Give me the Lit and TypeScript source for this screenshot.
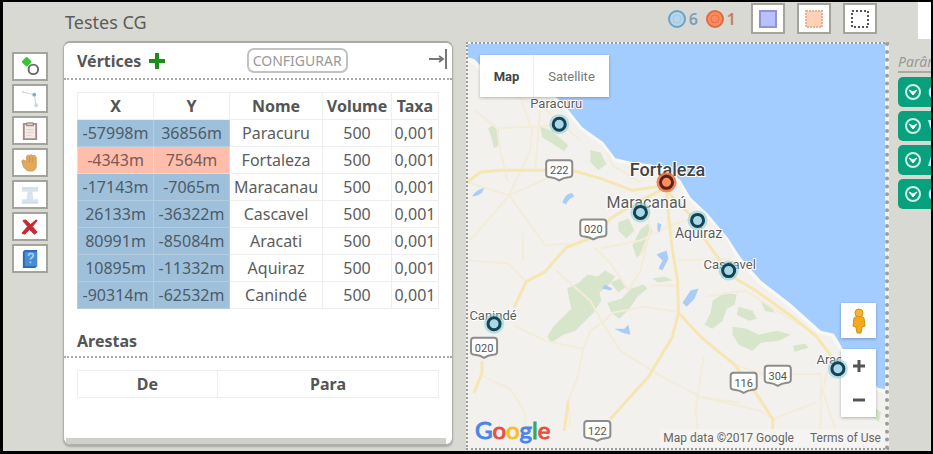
import { LitElement, html, svg, css } from "lit";
import { customElement } from "lit/decorators.js";
import { classMap } from "lit/directives/class-map.js";

const vertices = [
  { x: "-57998m", y: "36856m", nome: "Paracuru", centro: false },
  { x: "-4343m", y: "7564m", nome: "Fortaleza", centro: true },
  { x: "-17143m", y: "-7065m", nome: "Maracanau", centro: false },
  { x: "26133m", y: "-36322m", nome: "Cascavel", centro: false },
  { x: "80991m", y: "-85084m", nome: "Aracati", centro: false },
  { x: "10895m", y: "-11332m", nome: "Aquiraz", centro: false },
  { x: "-90314m", y: "-62532m", nome: "Canindé", centro: false },
];

const tools = [
  {
    label: "Adicionar vértice",
    icon: svg`<path d="M7 1l4 4-4 4-4-4z" fill="#35c435" stroke="#35c435" stroke-width="2" stroke-linejoin="round"/><circle cx="14" cy="13" r="5" fill="#fff" stroke="#666" stroke-width="2"/>`,
  },
  {
    label: "Adicionar aresta",
    icon: svg`<path d="M2 3l13 3 2 12" fill="none" stroke="#c6d6ea" stroke-width="1"/><circle cx="15" cy="6" r="2" fill="#8ba4d0"/><circle cx="17" cy="17" r="2" fill="#c6d6ee"/><circle cx="3" cy="3" r="1" fill="#c6d6ee"/>`,
  },
  {
    label: "Colar",
    icon: svg`<path d="M4 3h13v16H4z" fill="#f3e9e7" stroke="#a58c89" stroke-width="2"/><path d="M7 2h7v3H7z" fill="#d9c9c6" stroke="#8d7774"/><path d="M7 9h7M7 12h7M7 15h5" stroke="#ddd0ce"/>`,
  },
  {
    label: "Mover",
    icon: svg`<path d="M7 4c0-2 2-2 3-1 1-2 3-1 3 0 2-1 4 0 4 2v9c0 3-2 5-6 5-4 0-5-2-7-4L2 9c0-2 2-2 3-1l2 1z" fill="#e0a95c" stroke="#d09a50" stroke-width="1"/><path d="M10 4v6M13 4v6" stroke="#c9924a"/>`,
  },
  {
    label: "Texto",
    icon: svg`<path d="M2 3h17v4H2zM8 7h5l1 8H7zM2 15h17v4H2z" fill="#d9e3ee"/><path d="M2 3h17M2 19h17" stroke="#c5d3e2"/>`,
  },
  {
    label: "Excluir",
    icon: svg`<path d="M3 4l3-1 5 5 6-5 1 1-5 6 5 6-3 2-5-5-5 5-3-1 6-7z" fill="#c62a33" stroke="#c62a33"/>`,
  },
  {
    label: "Ajuda",
    icon: svg`<path d="M3 3l2-2h13v17l-2 2H3z" fill="#2c6bb3"/><path d="M5 3h13v15H5z" fill="#4b8bd0"/><path d="M9 7c0-3 5-3 5 0 0 2-3 2-3 4M11 13v2" fill="none" stroke="#9cccf5" stroke-width="2"/>`,
  },
];

const roads = {
  major: [
    "M467 182L480 172 500 170H545L575 171 600 178 632 190 660 186",
    "M514 307L526 281 545 271 566 247 594 236 610 218 640 200 660 190",
    "M610 418L648 376 672 336 678 312 677 280 672 250 668 215 666 190",
    "M678 312L700 336 734 364 755 392 772 418 772 436",
    "M666 190L690 215 705 240 730 275 755 290 790 315 815 335 830 355",
    "M482 360V372L474 392",
    "M564 430L568 400",
  ],
  minor: [
    "M467 260L508 263 526 281", "M508 182L500 150 497 128 475 110", "M509 195L530 150 532 130 520 97",
    "M509 195L470 240", "M509 195L545 245 568 243 566 247", "M467 182L509 195 560 172",
    "M535 170L540 110M500 128L560 125", "M514 325L545 340 583 348 590 330 602 322",
    "M583 348L577 378 568 400 570 425", "M602 322L620 350 660 375 700 396 740 402",
    "M482 375L510 388 524 410 528 448", "M556 270L590 300 602 322 612 312 644 306 677 311",
    "M594 247L610 262 628 290 640 270 650 230", "M677 260L730 258M650 285H677", "M645 200L650 230 640 255",
    "M600 135L612 165 640 182", "M703 356L695 410 700 448", "M734 364L765 374 820 373 820 420 815 445",
    "M772 418L815 402", "M830 355L822 390 835 430", "M700 396L760 410 775 420",
    "M706 296L745 290 800 325", "M480 60L497 90 540 105 580 140", "M523 233V260", "M700 215L670 225 640 240 600 248",
  ],
  park: [
    "M488 128l6-4 5 6-1 16-4 2-3-12zM540 126l12 5 16 14-4 6-12-8-10-6z",
    "M567 288l12-6 8-8 10 2 8-6 10 6-8 10-8 6 2 8-8 12-10 10-8 8-12 4-12 8-4-6 6-10 8-8 10-10z",
    "M607 302l14-4 10-10 12-4 4 4-10 8-8 12-10 10-8-6z",
    "M632 245l8-16 8-6 4 8-10 22-6 4zM610 282l10-4 6 8-8 6z",
    "M712 300l12-8 12 2-2 10-8 4-4 12-10 8-8-4 6-12z",
    "M738 306l14 4 4 8-8 2-12-6zM732 326l14 2 12 6 18-4 14 4-12 6-18 2-8 8-14-6-6-10z",
    "M760 300l10 6 4 6-10-2zM590 150l10 2 6 12-8 6-8-8zM618 222l10-4 6 12-8 8-8-8z",
    "M652 278l12-2 8 4-14 2zM792 345l12-2 4 4-14 4zM870 405l10 6-2 10-8-6z",
  ],
  lake: [
    "M472 196q6-8 12-8-2 8-12 8zM562 202q4-10 10-9l2 3q-6 2-8 8z",
    "M656 254l10-4 2 8-6 12-4-2 4-8zM682 302l8-12 8-2-4 10-8 8zM614 328h10l4-4 2 10-8-2zM657 222l4 2-2 8-2-2z",
    "M604 284l8 4-2 2-8-2z",
  ],
};

const shields = [
  { x: 559, y: 169, n: "222" }, { x: 593, y: 228, n: "020" }, { x: 484, y: 346, n: "020" },
  { x: 743, y: 381, n: "116" }, { x: 777, y: 374, n: "304" }, { x: 597, y: 429, n: "122" },
];

const places = [
  { x: 559, y: 124, tx: 556, ty: 108, nome: "Paracuru", size: "town" },
  { x: 666, y: 182, tx: 667, ty: 176, nome: "Fortaleza", size: "town city" },
  { x: 640, y: 212, tx: 646, ty: 208, nome: "Maracanaú", size: "town large" },
  { x: 697, y: 220, tx: 698, ty: 238, nome: "Aquiraz", size: "town medium" },
  { x: 728, y: 270, tx: 729, ty: 268, nome: "Cascavel", size: "town" },
  { x: 494, y: 323, tx: 493, ty: 319, nome: "Canindé", size: "town" },
  { x: 837, y: 368, tx: 836, ty: 363, nome: "Aracati", size: "town" },
];

@customElement("side-tools")
export class SideTools extends LitElement {
  static styles = css`
    :host { display: flex; flex-direction: column; gap: 3px; width: 36px; }
    button { height: 29px; padding: 0; border: 2px solid #a3a49b; background: #fff; display: grid; place-items: center; }
    svg { width: 20px; height: 20px; display: block; }
  `;
  render() {
    return tools.map((t) => html`<button aria-label=${t.label}><svg viewBox="0 0 21 21">${t.icon}</svg></button>`);
  }
}

@customElement("graph-panel")
export class GraphPanel extends LitElement {
  static styles = css`
    :host {
      display: flex; flex-direction: column; box-sizing: border-box; background: #fff;
      border: 1px solid #b0b1aa; border-top: 2px solid #aaaba6; border-radius: 7px;
      box-shadow: 0 2px 2px #aaaba6; color: #5c5c5c; font-size: 16px; overflow: hidden;
    }
    .head { display: flex; align-items: center; height: 35px; padding: 0 5px 0 13px; border-bottom: 2px dotted #aaa; }
    .head.low { height: 31px; margin-top: 16px; }
    h2 { margin: 0; font-size: 16px; font-weight: 700; color: #555; }
    .add { border: 0; background: none; padding: 0; margin-left: 8px; width: 16px; height: 16px; }
    .add svg, .collapse svg { display: block; }
    .config {
      margin: 0 auto; height: 25px; padding: 0 4px; border: 2px solid #c2c2c2; border-radius: 7px;
      background: #fff; color: #999; font: 14px "Noto Sans", sans-serif;
    }
    .collapse { border: 0; background: none; padding: 0; align-self: flex-start; margin-top: 6px; }
    .wrap { padding: 12px 13px 0; }
    table { width: 100%; border-collapse: collapse; table-layout: fixed; }
    th, td { box-sizing: border-box; height: 27px; padding: 0; border: 1px solid #eee; text-align: center; line-height: 20px; white-space: nowrap; }
    th { color: #555; }
    .coord { background: #9fc0da; color: #4c5c6a; border-color: #b4cde0; }
    .coord.centro { background: #ffbdac; color: #7a5a55; border-color: #ffd4c9; }
    .cx, .cy { width: 76px; }
    .cn { width: 93px; }
    .cv { width: 69px; }
    .from { width: 140px; }
    .bar { height: 6px; margin: auto 6px 0 2px; background: #cfd0cc; }
  `;
  render() {
    return html`
      <div class="head">
        <h2>Vértices</h2>
        <button class="add" aria-label="Adicionar vértice">
          <svg width="16" height="16" viewBox="0 0 16 16"><path d="M8 0v16M0 8h16" stroke="#1a8f1a" stroke-width="4" /></svg>
        </button>
        <button class="config">CONFIGURAR</button>
        <button class="collapse" aria-label="Recolher painel">
          <svg width="18" height="20" viewBox="0 0 18 20"><path d="M0 10h13M10 7l4 3-4 3M17 0v20" fill="none" stroke="#777" stroke-width="2" /></svg>
        </button>
      </div>
      <div class="wrap">
        <table>
          <thead>
            <tr><th class="cx">X</th><th class="cy">Y</th><th class="cn">Nome</th><th class="cv">Volume</th><th>Taxa</th></tr>
          </thead>
          <tbody>
            ${vertices.map((v) => {
              const c = classMap({ coord: true, centro: v.centro });
              return html`<tr><td class=${c}>${v.x}</td><td class=${c}>${v.y}</td><td>${v.nome}</td><td>500</td><td>0,001</td></tr>`;
            })}
          </tbody>
        </table>
      </div>
      <div class="head low"><h2>Arestas</h2></div>
      <div class="wrap">
        <table>
          <thead><tr><th class="from">De</th><th>Para</th></tr></thead>
        </table>
      </div>
      <div class="bar"></div>
    `;
  }
}

@customElement("region-map")
export class RegionMap extends LitElement {
  static styles = css`
    :host {
      display: block; position: relative; box-sizing: border-box; overflow: hidden; background: #f3f1ee;
      border: 2px dotted #9b9d9b; border-right-width: 4px; font-family: Roboto, sans-serif;
    }
    .canvas { position: absolute; inset: 0; width: 100%; height: 100%; }
    .pins { pointer-events: none; }
    .sea { fill: #a3ccff; }
    .coast { fill: none; stroke: #f8f8f4; stroke-width: 6; }
    .major { fill: none; stroke: #f5e6b4; stroke-width: 3; stroke-linejoin: round; }
    .minor { fill: none; stroke: #f3ecd8; stroke-width: 2; stroke-linejoin: round; }
    .park { fill: #cfe2c0; opacity: 0.8; }
    .lake { fill: #a9cdf7; }
    .shield { fill: #fdfdfb; stroke: #8c8c8c; stroke-width: 2; }
    .number { font-size: 11px; fill: #555; text-anchor: middle; }
    .town { font-size: 13px; fill: #5c5c5c; text-anchor: middle; stroke: #fff; stroke-width: 2; paint-order: stroke; }
    .medium { font-size: 14px; }
    .large { font-size: 16px; }
    .city { font-size: 18px; font-weight: 500; fill: #444; }
    .halo { fill: #8ed0d8; opacity: 0.6; }
    .pin { fill: #a9d9e8; stroke: #164252; stroke-width: 3; }
    .capital .halo { fill: #f4713f; opacity: 0.85; }
    .capital .pin { fill: #ff8f60; stroke: #5a2418; }
    .types, .zoom, .person { position: absolute; background: #fff; box-shadow: 0 1px 3px #0004; }
    .types { left: 12px; top: 11px; display: flex; height: 42px; }
    button { border: 0; background: none; padding: 0; font: 13px Roboto, sans-serif; color: #777; display: grid; place-items: center; }
    .types button { width: 75px; }
    .types .on { width: 54px; font-weight: 700; color: #444; border-right: 1px solid #eee; }
    .person { right: 9px; bottom: 110px; width: 35px; height: 35px; }
    .zoom { right: 9px; bottom: 31px; width: 35px; }
    .zoom button { width: 35px; height: 34px; }
    .logo { position: absolute; left: 7px; bottom: 2px; font: 24px/32px Lato, sans-serif; -webkit-text-stroke: 1px currentColor; }
    .b { color: #4a86e8; }
    .r { color: #e8503f; }
    .y { color: #f6bf26; }
    .g { color: #3ba556; }
    .credits { position: absolute; right: 1px; bottom: 1px; display: flex; gap: 16px; padding: 0 3px; font-size: 12px; line-height: 18px; color: #666; background: #f7f6f4aa; }
    a { color: inherit; text-decoration: none; }
  `;
  render() {
    return html`
      <svg class="canvas" viewBox="468 44 416 403" preserveAspectRatio="xMinYMin slice">
        ${roads.park.map((d) => svg`<path class="park" d=${d}/>`)}
        ${roads.minor.map((d) => svg`<path class="minor" d=${d}/>`)}
        ${roads.major.map((d) => svg`<path class="major" d=${d}/>`)}
        ${roads.lake.map((d) => svg`<path class="lake" d=${d}/>`)}
        <path class="coast" d="M466 57l8 4 12 12 66 22 14 12 16 20 21 15 12 16 18 5 30 4 16 13 10 16 17 17 20 20 13 24 20 23 30 23 30 27 13 3 10 17 34 37 14 5" />
        <path class="sea" d="M466 40V57l8 2 10 10 68 24 14 14 16 20 21 15 12 16 18 4 30 4 17 14 10 17 17 16 20 24 13 20 20 23 30 23 30 27 13 3 10 17 34 37 14 3 200 0V40z" />
        ${shields.map(
          (s) => svg`<g transform="translate(${s.x} ${s.y})"><path class="shield" d="M-10-9h20q3 0 3 3v11q0 3-4 3l-5 1-4 2-4-2-5-1q-4 0-4-3v-11q0-3 3-3z"/><text class="number" y="5">${s.n}</text></g>`
        )}
        ${places.map((p) => svg`<text class=${p.size} x=${p.tx} y=${p.ty}>${p.nome}</text>`)}
      </svg>
      <div class="types"><button class="on">Map</button><button>Satellite</button></div>
      <button class="person" aria-label="Street View">
        <svg width="16" height="26" viewBox="0 0 16 26">
          <path d="M3 10q5-4 10 0l1 8-3 1-1 6H6l-1-6-3-1z" fill="#f2a91c" stroke="#d58f12" />
          <circle cx="8" cy="5" r="4" fill="#f7b52b" stroke="#d58f12" />
        </svg>
      </button>
      <div class="zoom">
        <button aria-label="Zoom in"><svg width="12" height="12"><path d="M6 0v12M0 6h12" stroke="#555" stroke-width="3" /></svg></button>
        <button aria-label="Zoom out"><svg width="12" height="12"><path d="M0 6h12" stroke="#555" stroke-width="3" /></svg></button>
      </div>
      <div class="logo"><span class="b">G</span><span class="r">o</span><span class="y">o</span><span class="b">g</span><span class="g">l</span><span class="r">e</span></div>
      <div class="credits"><span>Map data ©2017 Google</span><a href="#terms">Terms of Use</a></div>
      <svg class="canvas pins" viewBox="468 44 416 403" preserveAspectRatio="xMinYMin slice">
        ${places.map(
          (p) => svg`<g class=${p.nome === "Fortaleza" ? "capital" : ""}><circle class="halo" cx=${p.x} cy=${p.y} r="10"/><circle class="pin" cx=${p.x} cy=${p.y} r="6"/></g>`
        )}
      </svg>
    `;
  }
}

@customElement("app-root")
export class AppRoot extends LitElement {
  static styles = css`
    :host {
      display: grid; box-sizing: border-box; min-height: 100vh; overflow: hidden;
      grid-template-columns: 36px 390px minmax(0, 1fr) 33px; grid-template-rows: 39px minmax(0, 1fr);
      padding-left: 9px; background: #d8d9d2; border: solid #000; border-width: 2px 2px 3px 3px;
      font-family: "Noto Sans", sans-serif; color: #5c5c5c;
    }
    header { grid-column: 2 / 4; display: flex; align-items: center; padding-left: 17px; }
    h1 { margin: 0 auto 0 0; font-size: 18px; font-weight: 400; line-height: 24px; }
    .count { display: flex; align-items: center; gap: 3px; margin: 0 8px 5px 0; font-size: 16px; font-weight: 600; color: #7d9fb5; }
    .count.hot { color: #c4806a; margin-right: 15px; }
    .modes { display: flex; gap: 12px; align-self: flex-start; margin: 1px 21px 0 0; }
    .modes button { width: 34px; height: 31px; border: 2px solid #a3a49b; background: #fff; padding: 0; display: grid; place-items: center; }
    .corner { justify-self: end; width: 13px; height: 37px; background: #fff; }
    side-tools { margin-top: 11px; align-self: start; }
    graph-panel { margin: 0 0 6px 15px; width: 390px; }
    region-map { margin: 1px 9px 1px 28px; }
    aside { padding-top: 12px; overflow: hidden; min-width: 0; }
    .caption { font-size: 14px; line-height: 18px; font-style: italic; color: #999; border-bottom: 2px solid #aaa9a4; }
    .group { display: flex; align-items: center; gap: 7px; box-sizing: border-box; width: 120px; height: 30px; margin: 4px 0; padding: 0 7px; border: 0; border-radius: 5px; background: #08a07d; color: #fff; font: 700 16px "Noto Sans", sans-serif; }
  `;
  render() {
    return html`
      <span></span>
      <header>
        <h1>Testes CG</h1>
        <span class="count"><svg width="18" height="18"><circle cx="9" cy="9" r="8" fill="#b5d6ea" stroke="#6ba3c6" stroke-width="2" /><circle cx="9" cy="9" r="4" fill="none" stroke="#a3cbe2" /></svg>6</span>
        <span class="count hot"><svg width="18" height="18"><circle cx="9" cy="9" r="8" fill="#ff8a5c" stroke="#df6b45" stroke-width="2" /><circle cx="9" cy="9" r="4" fill="none" stroke="#e4714a" /></svg>1</span>
        <div class="modes">
          <button aria-label="Seleção azul"><svg width="18" height="18"><rect x="1" y="1" width="16" height="16" fill="#b9c0ff" stroke="#8d94d6" stroke-width="2" /></svg></button>
          <button aria-label="Seleção laranja"><svg width="18" height="18"><rect x="1" y="1" width="16" height="16" fill="#ffd2b8" stroke="#eab292" stroke-width="2" stroke-dasharray="2 1" /></svg></button>
          <button aria-label="Seleção livre"><svg width="18" height="18"><rect x="1" y="1" width="16" height="16" fill="none" stroke="#555" stroke-width="2" stroke-dasharray="2 2" /></svg></button>
        </div>
      </header>
      <div class="corner"></div>
      <side-tools></side-tools>
      <graph-panel></graph-panel>
      <region-map></region-map>
      <aside>
        <div class="caption">Parâmetros</div>
        ${["C", "V", "A", "C"].map(
          (t) => html`<button class="group">
            <svg width="16" height="16" viewBox="0 0 16 16"><circle cx="8" cy="8" r="7" fill="none" stroke="#c8f3e6" stroke-width="2" /><path d="M4 6l4 5 4-5-4 2z" fill="#fff" stroke="#fff" /></svg>${t}
          </button>`
        )}
      </aside>
    `;
  }
}
